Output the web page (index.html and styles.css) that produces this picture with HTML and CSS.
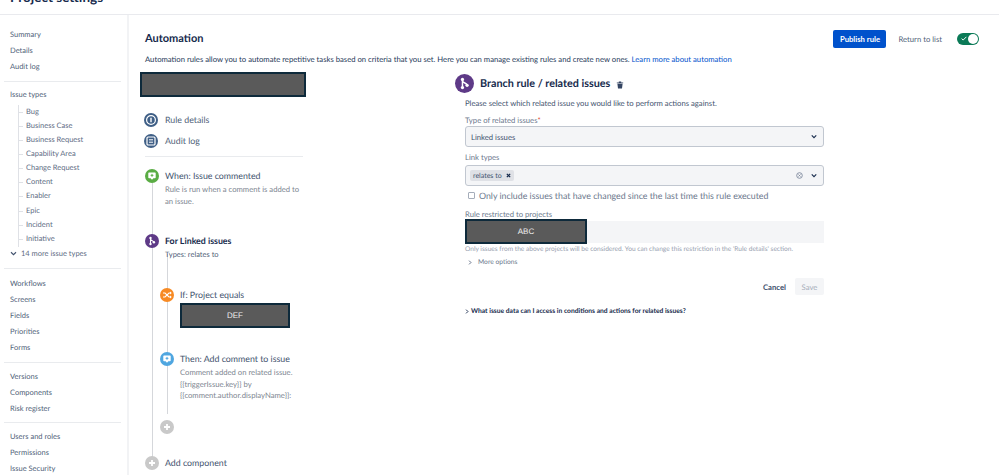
FILE: index.html
```html
<!DOCTYPE html>
<html lang="en">
<head>
<meta charset="utf-8">
<title>Project settings - Automation</title>
<link rel="stylesheet" href="styles.css">
</head>
<body>
<header class="topbar"><h1 class="page-title">Project settings</h1></header>
<div class="shell">
  <nav class="sidebar">
    <ul class="nav-group">
      <li>Summary</li><li>Details</li><li>Audit log</li>
    </ul>
    <hr class="nav-rule rule-a">
    <div class="nav-head">Issue types</div>
    <ul class="tree">
      <li>Bug</li><li>Business Case</li><li>Business Request</li><li>Capability Area</li><li>Change Request</li><li>Content</li><li>Enabler</li><li>Epic</li><li>Incident</li><li>Initiative</li>
    </ul>
    <div class="more"><svg class="more-chev" viewBox="0 0 8 6"><path d="M1 1.5 4 4.5 7 1.5" fill="none" stroke="#42526e" stroke-width="1.3"/></svg>14 more issue types</div>
    <hr class="nav-rule rule-b">
    <ul class="nav-group">
      <li>Workflows</li><li>Screens</li><li>Fields</li><li>Priorities</li><li>Forms</li>
    </ul>
    <hr class="nav-rule">
    <ul class="nav-group">
      <li>Versions</li><li>Components</li><li>Risk register</li>
    </ul>
    <hr class="nav-rule">
    <ul class="nav-group">
      <li>Users and roles</li><li>Permissions</li><li>Issue Security</li>
    </ul>
  </nav>
  <main class="main">
    <div class="title-row">
      <h2 class="main-title">Automation</h2>
      <div class="actions">
        <button class="btn-primary">Publish rule</button>
        <span class="return">Return to list</span>
        <span class="toggle"><svg class="toggle-check" viewBox="0 0 10 8"><path d="M1 4.2 3.6 6.6 9 1.2" fill="none" stroke="#fff" stroke-width="1.6"/></svg><span class="toggle-knob"></span></span>
      </div>
    </div>
    <p class="intro">Automation rules allow you to automate repetitive tasks based on criteria that you set. Here you can manage existing rules and create new ones. <a class="link">Learn more about automation</a></p>
    <div class="columns">
      <section class="rule-col">
        <div class="redact redact-name"></div>
        <div class="meta-row meta-first">
          <span class="dot dot-navy"><svg viewBox="0 0 14 14"><circle cx="7" cy="7" r="4.4" fill="none" stroke="#fff" stroke-width="1.2"/><path d="M7 4.8v4.4" stroke="#fff" stroke-width="1.4"/></svg></span>Rule details
        </div>
        <div class="meta-row">
          <span class="dot dot-navy"><svg viewBox="0 0 14 14"><rect x="3" y="3" width="8" height="8" rx="1" fill="none" stroke="#fff" stroke-width="1.2"/><path d="M5 5.8h4M5 8.2h4" stroke="#fff" stroke-width="1"/></svg></span>Audit log
        </div>
        <hr class="rule-sep">
        <div class="flow">
          <span class="line-outer"></span>
          <span class="line-inner"></span>
          <div class="step step-when">
            <span class="dot dot-green"><svg viewBox="0 0 14 14"><path d="M4 3.500h6a.7.7 0 0 1 .7.7v4.300a.7.7 0 0 1-.7.7H8.400L7 10.800 5.600 9.200H4a.7.7 0 0 1-.7-.7V4.200A.7.7 0 0 1 4 3.500z" fill="#fff"/><path d="M7 4.900v2.900M5.600 6.350h2.800" stroke="#5aac44" stroke-width="1"/></svg></span>
            <div class="step-body">
              <div class="step-title">When: Issue commented</div>
              <div class="step-text">Rule is run when a comment is added to an issue.</div>
            </div>
          </div>
          <div class="step step-branch">
            <span class="dot dot-purple"><svg viewBox="0 0 14 14"><path d="M5.500 4v6M5.500 5c.2 1.800 3.300 1.500 3.300 3.200" fill="none" stroke="#fff" stroke-width="1.100"/><circle cx="5.500" cy="4" r="1.200" fill="#fff"/><circle cx="5.500" cy="10" r="1.200" fill="#fff"/><circle cx="8.900" cy="8.300" r="1.200" fill="#fff"/></svg></span>
            <div class="step-body">
              <div class="step-title step-strong">For Linked issues</div>
              <div class="step-sub">Types: relates to</div>
            </div>
          </div>
          <div class="nested">
            <div class="step step-if">
              <span class="dot dot-orange"><svg viewBox="0 0 14 14"><path d="M3 5h2l4 4h1.500M3 9h2l4-4h1.500" fill="none" stroke="#fff" stroke-width="1.100"/><path d="M10 3.500 11.800 5 10 6.500zM10 7.500 11.800 9 10 10.500z" fill="#fff"/></svg></span>
              <div class="step-body">
                <div class="step-title">If: Project equals</div>
                <div class="redact redact-def">DEF</div>
              </div>
            </div>
            <div class="step step-then">
              <span class="dot dot-blue"><svg viewBox="0 0 14 14"><path d="M4 3.500h6a.7.7 0 0 1 .7.7v4.300a.7.7 0 0 1-.7.7H8.400L7 10.800 5.600 9.200H4a.7.7 0 0 1-.7-.7V4.200A.7.7 0 0 1 4 3.500z" fill="#fff"/><path d="M7 4.900v2.900M5.600 6.350h2.800" stroke="#4fa6e0" stroke-width="1"/></svg></span>
              <div class="step-body">
                <div class="step-title">Then: Add comment to issue</div>
                <div class="step-text step-text-wide">Comment added on related issue.<br>{{triggerIssue.key}} by<br>{{comment.author.displayName}}:</div>
              </div>
            </div>
            <span class="dot dot-grey dot-add"><svg viewBox="0 0 14 14"><path d="M7 4v6M4 7h6" stroke="#fff" stroke-width="1.800"/></svg></span>
          </div>
          <div class="step step-add">
            <span class="dot dot-grey"><svg viewBox="0 0 14 14"><path d="M7 4v6M4 7h6" stroke="#fff" stroke-width="1.800"/></svg></span>
            <div class="step-title">Add component</div>
          </div>
        </div>
      </section>
      <section class="form-col">
        <div class="form-head">
          <span class="dot dot-purple dot-big"><svg viewBox="0 0 14 14"><path d="M5.500 4v6M5.500 5c.2 1.800 3.300 1.500 3.300 3.200" fill="none" stroke="#fff" stroke-width="1.100"/><circle cx="5.500" cy="4" r="1.200" fill="#fff"/><circle cx="5.500" cy="10" r="1.200" fill="#fff"/><circle cx="8.900" cy="8.300" r="1.200" fill="#fff"/></svg></span>
          <h3 class="form-title">Branch rule / related issues</h3>
          <svg class="trash" viewBox="0 0 8 8"><path d="M.8 1.400h6.400v.9H.8zM2.800.5h2.400v.9H2.800zM1.400 2.800h5.200L6 7.500H2z" fill="#344563"/></svg>
        </div>
        <div class="form-body">
          <p class="form-lead">Please select which related issue you would like to perform actions against.</p>
          <label class="field-label label-type">Type of related issues<span class="req">*</span></label>
          <div class="select select-first">
            <span class="select-value">Linked issues</span>
            <svg class="chev" viewBox="0 0 8 6"><path d="M1 1.500 4 4.500 7 1.500" fill="none" stroke="#172b4d" stroke-width="1.500"/></svg>
          </div>
          <label class="field-label label-link">Link types</label>
          <div class="select select-second">
            <span class="tag">relates to<svg class="tag-x" viewBox="0 0 6 6"><path d="M1 1l4 4M5 1 1 5" stroke="#172b4d" stroke-width="1.500"/></svg></span>
            <span class="clear"><svg viewBox="0 0 8 8"><circle cx="4" cy="4" r="3.200" fill="none" stroke="#7a869a" stroke-width="1"/><path d="M2.800 2.800l2.400 2.400M5.200 2.800 2.800 5.200" stroke="#7a869a" stroke-width=".9"/></svg></span>
            <svg class="chev" viewBox="0 0 8 6"><path d="M1 1.500 4 4.500 7 1.500" fill="none" stroke="#172b4d" stroke-width="1.500"/></svg>
          </div>
          <div class="check-row"><span class="checkbox"></span>Only include issues that have changed since the last time this rule executed</div>
          <div class="field-label label-restrict">Rule restricted to projects</div>
          <div class="restricted"><div class="redact redact-abc">ABC</div></div>
          <p class="help">Only issues from the above projects will be considered. You can change this restriction in the 'Rule details' section.</p>
          <div class="more-options"><svg class="mini" viewBox="0 0 6 8"><path d="M1.500 1 4.500 4 1.500 7" fill="none" stroke="#42526e" stroke-width="1.300"/></svg>More options</div>
          <div class="form-actions">
            <span class="cancel">Cancel</span>
            <span class="save">Save</span>
          </div>
          <div class="faq"><svg class="mini mini-dark" viewBox="0 0 6 8"><path d="M1.500 1 4.500 4 1.500 7" fill="none" stroke="#172b4d" stroke-width="1.500"/></svg>What issue data can I access in conditions and actions for related issues?</div>
        </div>
      </section>
    </div>
  </main>
</div>
</body>
</html>
```
FILE: styles.css
```css
* { box-sizing: border-box; }
html, body { margin: 0; padding: 0; height: 475px; overflow: hidden; }
body { font-family: "Lato", "Open Sans", sans-serif; color: #172b4d; background: #fff; font-size: 7.700px; text-rendering: geometricPrecision; }
ul { list-style: none; margin: 0; padding: 0; }
h1, h2, h3, p { margin: 0; }

.topbar { height: 15px; border-bottom: 1px solid #e9eaee; overflow: hidden; position: relative; }
.page-title { font-size: 13.500px; font-weight: 700; line-height: 18px; margin: -12px 0 0 10px; color: #172b4d; }

.shell { display: flex; height: 460px; }
.sidebar { width: 129px; flex: none; border-right: 2px solid #f2f3f5; padding: 12px 6px 0 4px; color: #505f79; font-size: 7.500px; overflow: hidden; }
.nav-group li { height: 16.200px; line-height: 16px; padding-left: 6px; }
.nav-rule { border: 0; height: 1px; background: #e9ebee; margin: 5px 0 6px; }
.rule-a { margin: 5px 0; }
.rule-b { margin: 7px 0; }
.nav-head { height: 16px; line-height: 16px; padding-left: 6px; }
.tree { margin: 2px 0 0 14px; border-left: 1px solid #dfe1e6; height: 142px; }
.tree li { height: 14.150px; line-height: 14px; padding-left: 7px; color: #5e6c84; position: relative; }
.tree li::before { content: ""; position: absolute; left: 0; top: 7px; width: 4px; height: 1px; background: #dfe1e6; }
.more { height: 14px; line-height: 14px; padding-left: 6px; color: #5e6c84; display: flex; align-items: center; }
.more-chev { width: 7px; height: 5px; margin-right: 4px; }

.main { flex: 1; padding: 14px 20px 0 16px; min-width: 0; }
.title-row { display: flex; justify-content: space-between; align-items: center; height: 19px; }
.main-title { font-size: 11px; font-weight: 700; color: #172b4d; }
.actions { display: flex; align-items: center; }
.btn-primary { width: 53px; height: 18px; border: 0; border-radius: 2px; background: #0052cc; color: #fff; font: 700 7.700px "Lato", sans-serif; padding: 0; }
.return { margin-left: 12px; color: #505f79; }
.toggle { margin-left: 15px; width: 22px; height: 12px; border-radius: 6px; background: #0b7a57; display: flex; align-items: center; justify-content: space-between; padding: 0 1px 0 4px; }
.toggle-check { width: 6px; height: 5px; }
.toggle-knob { width: 10px; height: 10px; border-radius: 50%; background: #fff; }
.intro { margin-top: 5px; line-height: 12px; color: #253858; }
.link { color: #0052cc; }

.columns { display: flex; margin-top: 7px; }
.rule-col { width: 311px; margin-left: -5px; flex: none; }
.redact { background: #5a5a5a; border: 2px solid #0e2a3b; color: #eee; font-family: "Liberation Sans", sans-serif; font-size: 8px; display: flex; align-items: center; justify-content: center; }
.redact-name { width: 166px; height: 25px; }
.meta-row { display: flex; align-items: center; gap: 7px; height: 21px; margin-left: 4px; color: #505f79; font-size: 8.800px; }
.meta-first { margin-top: 12px; }
.dot { width: 14px; height: 14px; border-radius: 50%; display: flex; flex: none; }
.dot svg { width: 100%; height: 100%; }
.dot-navy { background: #3f5f86; }
.dot-green { background: #5aac44; }
.dot-purple { background: #5e3a87; }
.dot-orange { background: #f78a24; }
.dot-blue { background: #4fa6e0; }
.dot-grey { background: #c9c9c9; }
.rule-sep { border: 0; height: 1px; background: #e9ebee; width: 158px; margin: 5px 0 0 5px; }

.flow { position: relative; margin: 12px 0 0 5px; height: 300px; }
.line-outer { position: absolute; left: 7px; top: 14px; width: 1px; height: 280px; background: #d5d7db; }
.line-inner { position: absolute; left: 22px; top: 85px; width: 1px; height: 160px; background: #d5d7db; }
.step { display: flex; gap: 6px; position: relative; }
.step-title { font-size: 8.800px; color: #42526e; line-height: 14px; }
.step-strong { font-weight: 700; color: #172b4d; }
.step-text { width: 137px; color: #7d8590; font-size: 7.700px; line-height: 11.500px; margin-top: 1px; }
.step-text-wide { width: 120px; }
.step-sub { color: #505f79; font-size: 7.500px; line-height: 12px; margin-top: 1px; }
.step-branch { margin-top: 27px; }
.nested { margin: 27px 0 0 15px; }
.redact-def { width: 110px; height: 25px; margin: 1px 0 0 0; }
.step-then { margin-top: 24px; }
.dot-add { margin-top: 18px; position: relative; }
.step-add { margin-top: 22px; align-items: center; }

.form-col { flex: 1; margin-left: 4px; }
.form-head { display: flex; align-items: center; height: 20px; margin-top: 1px; }
.dot-big { width: 19px; height: 19px; }
.form-title { font-size: 10.800px; font-weight: 700; color: #172b4d; margin-left: 6px; }
.trash { width: 8px; height: 8px; margin: 3px 0 0 6px; }
.form-body { padding-left: 10px; width: 369px; }
.form-lead { margin-top: 4px; line-height: 12px; color: #42526e; }
.field-label { display: block; line-height: 12px; margin-top: 3px; color: #6b778c; }
.label-type { margin-top: 5px; }
.req { color: #de350b; }
.select { height: 21px; margin-top: 3px; border: 1px solid #c1c7d0; border-radius: 3px; background: #f4f5f7; display: flex; align-items: center; padding: 0 3px 0 4px; }
.select-first { margin-top: 0; }
.select-second { margin-top: 2px; }
.select-value { flex: 1; color: #42526e; padding-left: 1px; }
.chev { width: 6px; height: 5px; margin: 0 3px; }
.label-link { margin-top: 4px; }
.tag { display: flex; align-items: center; height: 11px; padding: 0 3px; margin-right: auto; background: #dfe1e6; border-radius: 2px; color: #42526e; font-size: 7px; }
.tag-x { width: 5px; height: 5px; margin-left: 4px; }
.clear { width: 7px; height: 7px; display: flex; margin-right: 5px; }
.check-row { display: flex; align-items: center; gap: 4px; height: 14px; margin: 2px 0 0 3px; color: #6b778c; font-size: 8.800px; }
.checkbox { width: 7px; height: 7px; border: 1px solid #a5adba; border-radius: 1px; }
.label-restrict { margin-top: 6px; }
.restricted { height: 22px; background: #f4f5f7; margin-top: 1px; display: flex; align-items: flex-start; }
.redact-abc { width: 122px; height: 25px; margin-top: -2px; }
.help { font-size: 6.600px; line-height: 10px; color: #97a0af; margin-top: 1px; }
.more-options { display: flex; align-items: center; gap: 6px; height: 12px; margin: 2px 0 0 3px; color: #6b778c; font-size: 6.700px; }
.mini { width: 4px; height: 5px; flex: none; }
.form-actions { display: flex; justify-content: flex-end; align-items: center; margin-top: 10px; gap: 9px; }
.cancel { color: #42526e; font-weight: 700; }
.save { width: 29px; height: 17px; background: #f4f5f7; border-radius: 2px; color: #a5adba; display: flex; align-items: center; justify-content: center; }
.faq { display: flex; align-items: center; gap: 2px; margin-top: 10px; color: #172b4d; font-size: 6.700px; font-weight: 700; line-height: 12px; }
```
